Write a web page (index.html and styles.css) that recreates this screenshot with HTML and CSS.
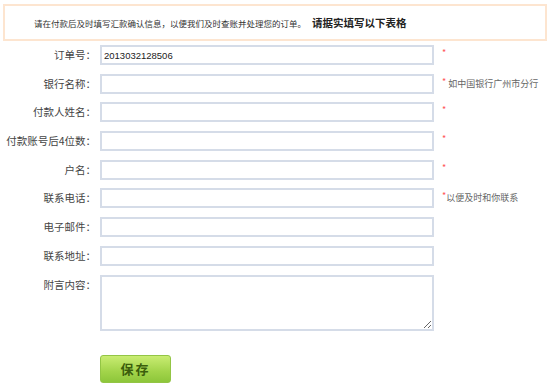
FILE: index.html
```html
<!DOCTYPE html>
<html lang="zh-CN">
<head>
    <meta charset="UTF-8">
    <title>汇款确认</title>
    <link rel="stylesheet" href="styles.css">
</head>
<body>
    <div class="notice">
        请在付款后及时填写汇款确认信息，以便我们及时查账并处理您的订单。<strong>请据实填写以下表格</strong>
    </div>

    <form class="pay-form">
        <label class="lbl">订单号：</label>
        <input class="field" type="text" value="2013032128506">
        <span class="tip"><i>*</i></span>

        <label class="lbl">银行名称：</label>
        <input class="field" type="text">
        <span class="tip"><i>*</i> 如中国银行广州市分行</span>

        <label class="lbl">付款人姓名：</label>
        <input class="field" type="text">
        <span class="tip"><i>*</i></span>

        <label class="lbl">付款账号后4位数：</label>
        <input class="field" type="text">
        <span class="tip"><i>*</i></span>

        <label class="lbl">户名：</label>
        <input class="field" type="text">
        <span class="tip"><i>*</i></span>

        <label class="lbl">联系电话：</label>
        <input class="field" type="text">
        <span class="tip"><i>*</i>以便及时和你联系</span>

        <label class="lbl">电子邮件：</label>
        <input class="field" type="text">
        <span class="tip"></span>

        <label class="lbl">联系地址：</label>
        <input class="field" type="text">
        <span class="tip"></span>

        <label class="lbl">附言内容：</label>
        <textarea class="field memo"></textarea>
        <span class="tip"></span>

        <span></span>
        <button class="save-btn" type="submit">保存</button>
    </form>
</body>
</html>
```

FILE: styles.css
```css
body {
    margin: 0;
    min-height: 385px;
    background: #fff;
    font-family: "Noto Sans CJK SC", "Liberation Sans", sans-serif;
    color: #333;
}
.notice {
    margin: 4px 5px 0 3px;
    height: 33px;
    border: 2px solid #fde5d0;
    padding-left: 29px;
    font-size: 8.5px;
    line-height: 33px;
    color: #333;
}
.notice strong {
    font-size: 10.5px;
    font-weight: bold;
    color: #222;
    margin-left: 6px;
}
.pay-form {
    display: grid;
    grid-template-columns: 96px 334px auto;
    grid-template-rows: repeat(8, 20px) 56px auto;
    column-gap: 4px;
    row-gap: 8.7px;
    align-items: start;
    margin-top: 4px;
}
.lbl {
    height: 20px;
    text-align: right;
    font-size: 10.5px;
    line-height: 20px;
    color: #444;
    white-space: nowrap;
}
.field {
    box-sizing: border-box;
    height: 20px;
    margin: 0;
    border: 2px solid #d5dce8;
    padding: 0 2px;
    font-family: "Liberation Sans", sans-serif;
    font-size: 9.5px;
    color: #222;
    outline: none;
}
.memo {
    height: 56px;
    resize: both;
}
.tip {
    height: 20px;
    padding-left: 4px;
    font-size: 9px;
    line-height: 20px;
    color: #666;
    white-space: nowrap;
}
.tip i {
    font-style: normal;
    color: #f55;
    font-size: 9px;
    line-height: 1;
    vertical-align: 2px;
}
.save-btn {
    grid-column: 2;
    justify-self: start;
    width: 71px;
    height: 28px;
    margin-top: 16px;
    border: 1px solid #93c545;
    border-radius: 3px;
    background: linear-gradient(#c9ec72, #a2d44a 60%, #8dc63a);
    font-family: "Noto Sans CJK SC", sans-serif;
    font-size: 13px;
    font-weight: bold;
    line-height: 26px;
    padding: 0;
    letter-spacing: 2px;
    color: #3b5e0c;
    cursor: pointer;
}
```
